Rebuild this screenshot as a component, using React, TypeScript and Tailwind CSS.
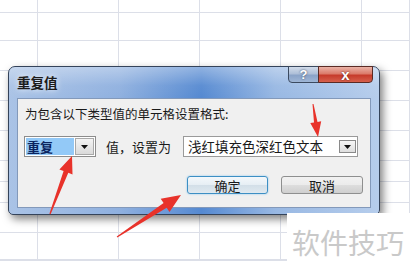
import React from "react";

const COLS = ["38px", "81px", "81px", "81px", "81px", "1fr"];
const ROWS = [13, 28, 30, 30, 30, 30, 21, 21, 30, 27, 1];

function arrowPts(
  tx: number,
  ty: number,
  px: number,
  py: number,
  headLen: number,
  headHalf: number,
  shaftHalf: number,
  tailHalf: number
) {
  const dx = px - tx;
  const dy = py - ty;
  const L = Math.hypot(dx, dy);
  const ux = dx / L;
  const uy = dy / L;
  const nx = -uy;
  const ny = ux;
  const bx = px - ux * headLen;
  const by = py - uy * headLen;
  const p = (x: number, y: number) => `${x.toFixed(1)},${y.toFixed(1)}`;
  return [
    p(tx + nx * tailHalf, ty + ny * tailHalf),
    p(bx + nx * shaftHalf, by + ny * shaftHalf),
    p(bx + nx * headHalf, by + ny * headHalf),
    p(px, py),
    p(bx - nx * headHalf, by - ny * headHalf),
    p(bx - nx * shaftHalf, by - ny * shaftHalf),
    p(tx - nx * tailHalf, ty - ny * tailHalf),
  ].join(" ");
}

function Triangle() {
  return (
    <svg width="7" height="4" viewBox="0 0 7 4">
      <path d="M0 0 L7 0 L3.5 4 Z" fill="#111" />
    </svg>
  );
}

export default function App() {
  const cells = [];
  for (let r = 0; r < ROWS.length; r++) {
    for (let c = 0; c < COLS.length; c++) {
      cells.push(
        <div
          key={`${r}-${c}`}
          className="border-r border-b border-[#dcdfe8]"
        />
      );
    }
  }

  return (
    <div className="relative w-[410px] h-[274px] overflow-hidden bg-white font-['Noto_Sans_CJK_SC','Liberation_Sans',sans-serif]">
      {/* spreadsheet grid */}
      <div
        className="grid w-[410px] h-[274px]"
        style={{
          gridTemplateColumns: COLS.join(" "),
          gridTemplateRows: ROWS.map((h) => `${h}px`).join(" "),
        }}
      >
        {cells}
      </div>

      {/* dialog window */}
      <div className="absolute left-[8px] top-[66px] w-[372px] h-[149px] flex flex-col rounded-t-[7px] rounded-b-[5px] border border-[#34435a] bg-[linear-gradient(90deg,#aac3e6_0%,#8fb0df_30%,#5589d1_52%,#98b8e3_72%,#b6cdec_100%)] shadow-[3px_4px_9px_rgba(0,0,0,0.5)]">
        <div className="h-[31px] flex justify-between items-start rounded-t-[6px] bg-[linear-gradient(180deg,rgba(255,255,255,0.35)_0%,rgba(255,255,255,0.05)_60%,rgba(255,255,255,0)_100%)]">
          <div className="pl-[8px] pt-[6px] text-[13.5px] leading-[18px] font-bold text-[#1b1b1b] [text-shadow:0_0_6px_rgba(255,255,255,0.9)]">
            重复值
          </div>
          <div className="flex mr-[6px] -mt-px">
            <div className="w-[31px] h-[17px] flex items-center justify-center rounded-bl-[4px] border border-[#3b4a60] bg-[linear-gradient(180deg,#d2dcea_0%,#aebfd8_45%,#8aa3c8_55%,#9fb6d6_100%)] text-white text-[13px] font-bold leading-none font-['Liberation_Sans',sans-serif] [text-shadow:0_0_2px_#2c3b52]">
              ?
            </div>
            <div className="w-[55px] h-[17px] -ml-px flex items-center justify-center rounded-br-[4px] border border-[#5a2a24] bg-[linear-gradient(180deg,#eab2a6_0%,#db7b6a_45%,#c63b2b_55%,#d6604c_100%)] text-white text-[15px] font-bold leading-none font-['Liberation_Sans',sans-serif] [text-shadow:0_0_2px_#5a1a12]">
              x
            </div>
          </div>
        </div>

        <div className="mx-[8px] h-[110px] flex flex-col border border-[#8399ba] bg-[#f0f0f0]">
          <div className="pl-[7px] pt-[7px] text-[12.5px] leading-[15px] text-[#1a1a1a]">
            为包含以下类型值的单元格设置格式:
          </div>

          <div className="mt-[15px] flex items-center pl-[6px] h-[21px]">
            <div className="w-[72px] h-[21px] flex border border-[#8c8c8c] bg-white p-px">
              <div className="w-[48px] h-full flex items-center pl-px bg-[#93c9f7] text-[13px] leading-none font-bold text-[#0b2460]">
                重复
              </div>
              <div className="ml-px flex-1 flex items-center justify-center border border-[#a9a9a9] bg-[linear-gradient(180deg,#f4f4f4,#dadada)]">
                <Triangle />
              </div>
            </div>
            <div className="ml-[10px] text-[13px] leading-none text-[#1a1a1a]">
              值，设置为
            </div>
            <div className="ml-[12px] w-[175px] h-[21px] flex items-center justify-between border border-[#9a9a9a] bg-white pl-[4px] pr-px">
              <span className="text-[13.5px] leading-none text-[#1a1a1a]">
                浅红填充色深红色文本
              </span>
              <div className="w-[17px] h-[13px] flex items-center justify-center border border-[#8a8a8a] bg-[linear-gradient(180deg,#f6f6f6,#dedede)]">
                <Triangle />
              </div>
            </div>
          </div>

          <div className="mt-[19px] flex justify-end gap-[13px] pr-[7px]">
            <div className="w-[81px] h-[18px] flex items-center justify-center rounded-[3px] border border-[#3d8fc4] bg-[linear-gradient(180deg,#f4f8fb_0%,#e6eef4_50%,#d3dfe8_52%,#dfe9f0_100%)] shadow-[0_0_2px_#7fc3ee] text-[13px] leading-none text-[#1a1a1a]">
              确定
            </div>
            <div className="w-[82px] h-[18px] flex items-center justify-center rounded-[3px] border border-[#8e8f8f] bg-[linear-gradient(180deg,#f2f2f2_0%,#ebebeb_50%,#dddddd_52%,#cfcfcf_100%)] text-[13px] leading-none text-[#1a1a1a]">
              取消
            </div>
          </div>
        </div>
      </div>

      {/* watermark */}
      <div className="absolute left-[287px] top-[213px] w-[123px] h-[61px] bg-white pl-[5px] pt-[15px] text-[28px] leading-[28px] text-[#c9c9c9]">
        软件技巧
      </div>

      {/* red arrows */}
      <svg
        className="absolute left-0 top-0 pointer-events-none"
        width="410"
        height="274"
        viewBox="0 0 410 274"
      >
        <polygon points={arrowPts(50, 214, 72, 156, 17, 7, 2.5, 0.6)} fill="#e8322a" />
        <polygon points={arrowPts(117, 237, 181, 195, 19, 8, 2.8, 0.6)} fill="#e8322a" />
        <polygon points={arrowPts(313, 104, 318, 137, 15, 5.5, 1.8, 0.5)} fill="#e8322a" />
      </svg>
    </div>
  );
}
